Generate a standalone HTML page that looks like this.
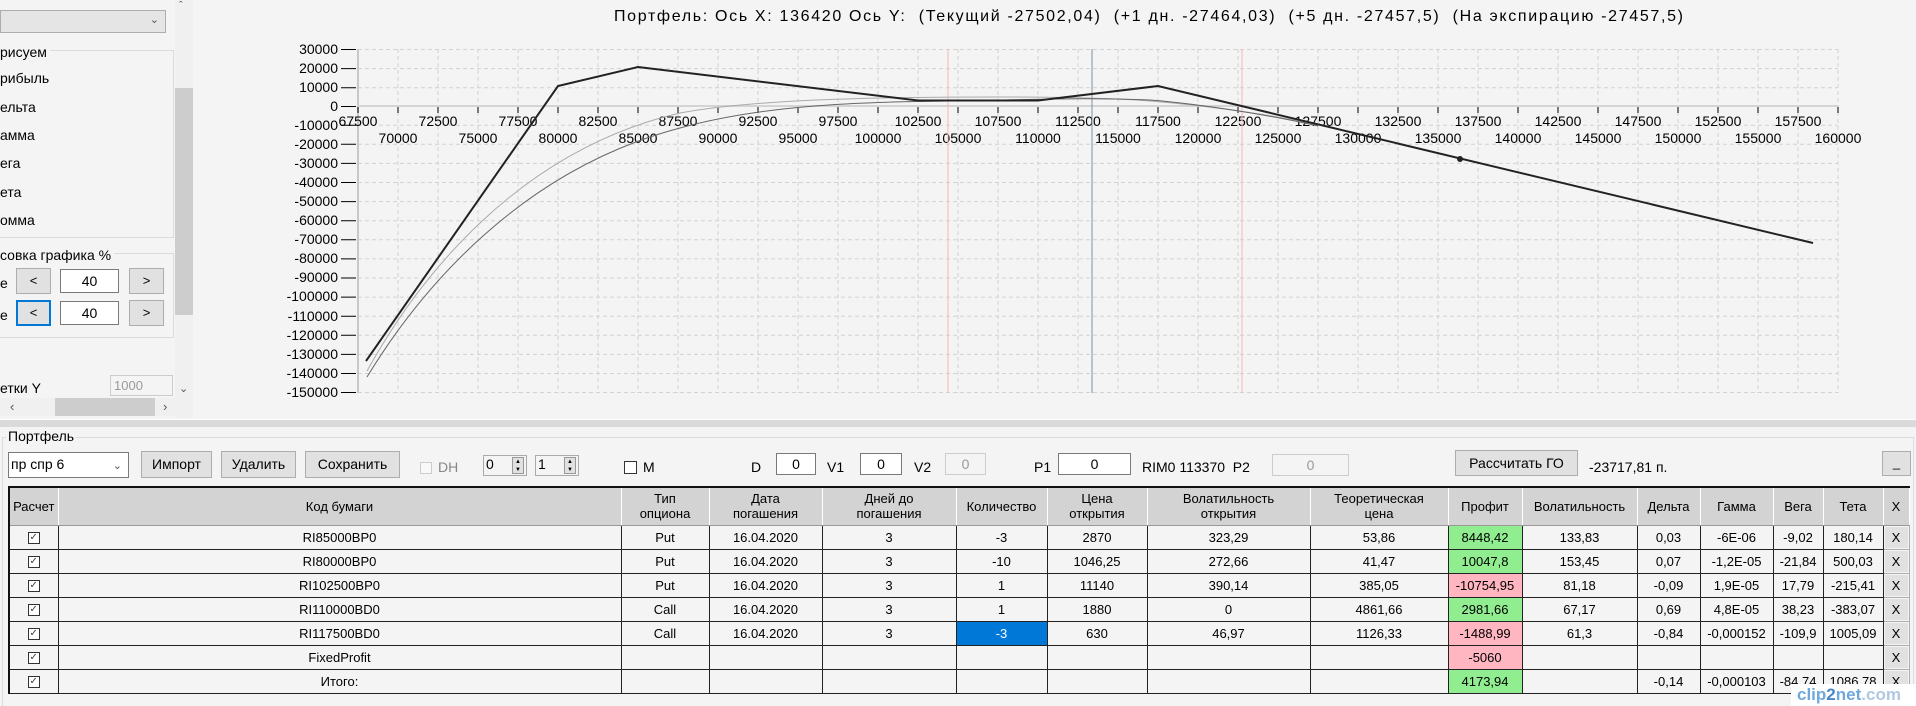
<!DOCTYPE html>
<html><head><meta charset="utf-8"><style>
*{box-sizing:border-box;margin:0;padding:0}
body{width:1916px;height:706px;overflow:hidden;background:#f4f4f4;font-family:"Liberation Sans",sans-serif;font-size:13px;color:#000;position:relative}
.a{position:absolute;white-space:nowrap}
.btn{position:absolute;background:#e1e1e1;border:1px solid #adadad;text-align:center;font-size:13px}
.box{position:absolute;background:#fff;border:1px solid #7a7a7a;text-align:center;font-size:13px}
.dis{background:#f4f4f4;border-color:#ccc;color:#999}
table{position:absolute;left:8px;top:486px;border-collapse:collapse;table-layout:fixed;border-top:2px solid #111;border-left:2px solid #111}
td{border:1px solid #222;height:24px;text-align:center;font-size:13px;background:#f4f4f4;overflow:hidden;white-space:nowrap;padding:0}
th{background:#d3d3d3;font-weight:normal;font-size:13px;height:38px;border-right:1px solid #fff;border-left:1px solid #aaa;border-bottom:1px solid #999;line-height:15px;padding:0}
.g{background:#90ee90}.p{background:#ffb6c1}
.cb{display:inline-block;width:12px;height:12px;border:1px solid #333;background:#fff;font-size:10px;line-height:10px;color:#444;vertical-align:middle}
.x{background:#e1e1e1;border:1px solid #adadad;box-shadow:inset 0 0 0 1px #f4f4f4}
</style></head><body>
<!-- left panel -->
<div class="a" style="left:0;top:0;width:196px;height:418px;background:#f4f4f4"></div>
<div class="a" style="left:0;top:10px;width:166px;height:23px;background:#e5e5e5;border:1px solid #adadad"><span class="a" style="right:6px;top:2px;font-size:11px;color:#555">&#8964;</span></div>
<div class="a" style="left:175px;top:0;width:18px;height:418px;background:#f0f0f0"></div>
<div class="a" style="left:179px;top:0;font-size:11px;color:#555">&#710;</div>
<div class="a" style="left:175px;top:88px;width:18px;height:227px;background:#cdcdcd"></div>
<div class="a" style="left:0;top:50px;width:174px;height:188px;border:1px solid #dcdcdc;border-left:none"></div>
<div class="a" style="left:0;top:44px;background:#f4f4f4;padding-right:3px;font-size:14px">рисуем</div>
<div class="a" style="left:0;top:70px;font-size:14px">рибыль</div>
<div class="a" style="left:0;top:99px;font-size:14px">ельта</div>
<div class="a" style="left:0;top:127px;font-size:14px">амма</div>
<div class="a" style="left:0;top:155px;font-size:14px">ега</div>
<div class="a" style="left:0;top:184px;font-size:14px">ета</div>
<div class="a" style="left:0;top:212px;font-size:14px">омма</div>
<div class="a" style="left:0;top:253px;width:174px;height:85px;border:1px solid #dcdcdc;border-left:none"></div>
<div class="a" style="left:0;top:247px;background:#f4f4f4;padding-right:3px;font-size:14px">совка графика %</div>
<div class="a" style="left:0;top:275px;font-size:14px">е</div>
<div class="btn" style="left:16px;top:268px;width:35px;height:26px;line-height:24px">&lt;</div>
<div class="box" style="left:60px;top:269px;width:59px;height:24px;line-height:22px;font-size:14px">40</div>
<div class="btn" style="left:129px;top:268px;width:35px;height:26px;line-height:24px">&gt;</div>
<div class="a" style="left:0;top:307px;font-size:14px">е</div>
<div class="btn" style="left:16px;top:300px;width:35px;height:26px;line-height:22px;border:2px solid #0078d7">&lt;</div>
<div class="box" style="left:60px;top:301px;width:59px;height:24px;line-height:22px;font-size:14px">40</div>
<div class="btn" style="left:129px;top:300px;width:35px;height:26px;line-height:24px">&gt;</div>
<div class="a" style="left:0;top:380px;font-size:14px">етки Y</div>
<div class="box dis" style="left:110px;top:375px;width:63px;height:21px;line-height:19px;text-align:left;padding-left:3px">1000</div>
<div class="a" style="left:179px;top:382px;font-size:11px;color:#555">&#8964;</div>
<div class="a" style="left:0;top:398px;width:175px;height:18px;background:#f0f0f0"></div>
<div class="a" style="left:55px;top:398px;width:100px;height:18px;background:#cdcdcd"></div>
<div class="a" style="left:10px;top:399px;color:#555">&#8249;</div>
<div class="a" style="left:163px;top:399px;color:#555">&#8250;</div>
<!-- chart -->
<svg class="a" style="left:0;top:0" width="1916" height="420">
<text x="614" y="21" font-family="Liberation Sans" font-size="16" textLength="1069" lengthAdjust="spacing" style="white-space:pre">Портфель: Ось X: 136420 Ось Y:  (Текущий -27502,04)  (+1 дн. -27464,03)  (+5 дн. -27457,5)  (На экспирацию -27457,5)</text>
<g stroke="#d2d2d2" stroke-dasharray="4,3" stroke-width="1">
<path d="M398 49V393M438 49V393M478 49V393M518 49V393M558 49V393M598 49V393M638 49V393M678 49V393M718 49V393M758 49V393M798 49V393M838 49V393M878 49V393M918 49V393M958 49V393M998 49V393M1038 49V393M1078 49V393M1118 49V393M1158 49V393M1198 49V393M1238 49V393M1278 49V393M1318 49V393M1358 49V393M1398 49V393M1438 49V393M1478 49V393M1518 49V393M1558 49V393M1598 49V393M1638 49V393M1678 49V393M1718 49V393M1758 49V393M1798 49V393M1838 49V393"/>
<path d="M358 49.5H1838M358 68.6H1838M358 87.7H1838M358 125.2H1838M358 144.3H1838M358 163.4H1838M358 182.5H1838M358 201.6H1838M358 220.7H1838M358 239.8H1838M358 258.9H1838M358 278H1838M358 297.1H1838M358 316.2H1838M358 335.3H1838M358 354.4H1838M358 373.5H1838M358 392.5H1838"/>
</g>
<line x1="358" y1="49" x2="358" y2="393" stroke="#c8c8c8" stroke-width="2"/>
<line x1="358" y1="106" x2="1838" y2="106" stroke="#d4d4d4" stroke-width="2"/>
<g stroke="#000"><path d="M358 107v6M398 107v6M438 107v6M478 107v6M518 107v6M558 107v6M598 107v6M638 107v6M678 107v6M718 107v6M758 107v6M798 107v6M838 107v6M878 107v6M918 107v6M958 107v6M998 107v6M1038 107v6M1078 107v6M1118 107v6M1158 107v6M1198 107v6M1238 107v6M1278 107v6M1318 107v6M1358 107v6M1398 107v6M1438 107v6M1478 107v6M1518 107v6M1558 107v6M1598 107v6M1638 107v6M1678 107v6M1718 107v6M1758 107v6M1798 107v6M1838 107v6"/>
<path d="M341 49.5h15M341 68.6h15M341 87.7h15M341 106.5h15M341 125.2h15M341 144.3h15M341 163.4h15M341 182.5h15M341 201.6h15M341 220.7h15M341 239.8h15M341 258.9h15M341 278h15M341 297.1h15M341 316.2h15M341 335.3h15M341 354.4h15M341 373.5h15M341 392.5h15"/></g>
<g font-family="Liberation Sans" font-size="14" text-anchor="end">
<text x="338" y="54">30000</text><text x="338" y="73">20000</text><text x="338" y="92">10000</text><text x="338" y="111">0</text><text x="338" y="130">-10000</text><text x="338" y="149">-20000</text><text x="338" y="168">-30000</text><text x="338" y="187">-40000</text><text x="338" y="206">-50000</text><text x="338" y="225">-60000</text><text x="338" y="244">-70000</text><text x="338" y="263">-80000</text><text x="338" y="282">-90000</text><text x="338" y="301">-100000</text><text x="338" y="321">-110000</text><text x="338" y="340">-120000</text><text x="338" y="359">-130000</text><text x="338" y="378">-140000</text><text x="338" y="397">-150000</text>
</g>
<g font-family="Liberation Sans" font-size="14" text-anchor="middle">
<text x="358" y="126">67500</text><text x="438" y="126">72500</text><text x="518" y="126">77500</text><text x="598" y="126">82500</text><text x="678" y="126">87500</text><text x="758" y="126">92500</text><text x="838" y="126">97500</text><text x="918" y="126">102500</text><text x="998" y="126">107500</text><text x="1078" y="126">112500</text><text x="1158" y="126">117500</text><text x="1238" y="126">122500</text><text x="1318" y="126">127500</text><text x="1398" y="126">132500</text><text x="1478" y="126">137500</text><text x="1558" y="126">142500</text><text x="1638" y="126">147500</text><text x="1718" y="126">152500</text><text x="1798" y="126">157500</text>
<text x="398" y="143">70000</text><text x="478" y="143">75000</text><text x="558" y="143">80000</text><text x="638" y="143">85000</text><text x="718" y="143">90000</text><text x="798" y="143">95000</text><text x="878" y="143">100000</text><text x="958" y="143">105000</text><text x="1038" y="143">110000</text><text x="1118" y="143">115000</text><text x="1198" y="143">120000</text><text x="1278" y="143">125000</text><text x="1358" y="143">130000</text><text x="1438" y="143">135000</text><text x="1518" y="143">140000</text><text x="1598" y="143">145000</text><text x="1678" y="143">150000</text><text x="1758" y="143">155000</text><text x="1838" y="143">160000</text>
</g>
<line x1="948" y1="49" x2="948" y2="393" stroke="#f2b8b8"/>
<line x1="1242" y1="49" x2="1242" y2="393" stroke="#f2b8b8"/>
<line x1="1092" y1="49" x2="1092" y2="393" stroke="#8090a0"/>
<path fill="none" stroke="#aaa" stroke-width="1" d="M367,371 C420,275 520,150 680,113 C760,98 900,97 1000,97 C1060,97 1110,98 1150,101 C1200,105 1270,114 1318,125"/>
<path fill="none" stroke="#666" stroke-width="1" d="M367,377 C420,290 520,170 680,128 C760,106 850,102 948,101 C1030,100 1080,97 1150,100 C1200,104 1270,115 1318,126"/>
<polyline fill="none" stroke="#222" stroke-width="2" points="366,361 558,86 638,67 918,100.5 1038,100.5 1158,86 1813,243"/>
<circle cx="1460" cy="159" r="3" fill="#222"/>
</svg>
<!-- splitter -->
<div class="a" style="left:0;top:419px;width:1916px;height:8px;background:#dadada;border-top:1px solid #fff"></div>
<div class="a" style="left:2px;top:437px;width:1912px;height:269px;border:1px solid #dcdcdc;border-bottom:none"></div>
<div class="a" style="left:6px;top:428px;background:#f4f4f4;padding:0 2px;font-size:14px">Портфель</div>
<!-- toolbar -->
<div class="box" style="left:8px;top:452px;width:121px;height:26px;text-align:left;padding-left:2px;line-height:22px;font-size:14px">пр спр 6<span class="a" style="right:6px;top:2px;font-size:11px;color:#555">&#8964;</span></div>
<div class="btn" style="left:141px;top:451px;width:71px;height:27px;line-height:25px;font-size:14px">Импорт</div>
<div class="btn" style="left:221px;top:451px;width:75px;height:27px;line-height:25px;font-size:14px">Удалить</div>
<div class="btn" style="left:305px;top:451px;width:95px;height:27px;line-height:25px;font-size:14px">Сохранить</div>
<div class="a" style="left:420px;top:462px;width:12px;height:12px;border:1px solid #ccc;background:#f8f8f8"></div>
<div class="a" style="left:438px;top:459px;color:#888;font-size:14px">DH</div>
<div class="a" style="left:483px;top:455px;width:44px;height:21px;border:1px solid #aaa;background:#f4f4f4;padding-left:2px;font-size:14px">0<span class="a" style="left:28px;top:1px;width:12px;height:17px;background:#e1e1e1;border:1px solid #999;font-size:6px;line-height:8px;text-align:center">▲<br>▼</span></div>
<div class="a" style="left:535px;top:455px;width:44px;height:21px;border:1px solid #aaa;background:#f4f4f4;padding-left:2px;font-size:14px">1<span class="a" style="left:28px;top:1px;width:12px;height:17px;background:#e1e1e1;border:1px solid #999;font-size:6px;line-height:8px;text-align:center">▲<br>▼</span></div>
<div class="a" style="left:624px;top:461px;width:13px;height:13px;border:1px solid #333;background:#fff"></div>
<div class="a" style="left:643px;top:459px;font-size:14px">M</div>
<div class="a" style="left:751px;top:459px;font-size:14px">D</div>
<div class="box" style="left:776px;top:453px;width:40px;height:22px;line-height:20px;font-size:14px">0</div>
<div class="a" style="left:827px;top:459px;font-size:14px">V1</div>
<div class="box" style="left:860px;top:453px;width:42px;height:22px;line-height:20px;font-size:14px">0</div>
<div class="a" style="left:914px;top:459px;font-size:14px">V2</div>
<div class="box dis" style="left:945px;top:453px;width:41px;height:22px;line-height:20px;font-size:14px">0</div>
<div class="a" style="left:1034px;top:459px;font-size:14px">P1</div>
<div class="box" style="left:1058px;top:453px;width:73px;height:22px;line-height:20px;font-size:14px">0</div>
<div class="a" style="left:1142px;top:459px;font-size:14px">RIM0 113370&nbsp; P2</div>
<div class="box dis" style="left:1272px;top:454px;width:77px;height:22px;line-height:20px;font-size:14px">0</div>
<div class="btn" style="left:1455px;top:450px;width:123px;height:26px;line-height:24px;font-size:14px">Рассчитать ГО</div>
<div class="a" style="left:1589px;top:459px;font-size:14px">-23717,81 п.</div>
<div class="btn" style="left:1882px;top:451px;width:29px;height:25px;line-height:22px">_</div>
<!-- table -->
<table>
<colgroup><col style="width:49px"><col style="width:563px"><col style="width:88px"><col style="width:113px"><col style="width:134px"><col style="width:91px"><col style="width:100px"><col style="width:163px"><col style="width:138px"><col style="width:74px"><col style="width:115px"><col style="width:63px"><col style="width:73px"><col style="width:50px"><col style="width:60px"><col style="width:26px"></colgroup>
<tr><th>Расчет</th><th>Код бумаги</th><th>Тип<br>опциона</th><th>Дата<br>погашения</th><th>Дней до<br>погашения</th><th>Количество</th><th>Цена<br>открытия</th><th>Волатильность<br>открытия</th><th>Теоретическая<br>цена</th><th>Профит</th><th>Волатильность</th><th>Дельта</th><th>Гамма</th><th>Вега</th><th>Тета</th><th>X</th></tr>
<tr><td><span class="cb">&#10003;</span></td><td>RI85000BP0</td><td>Put</td><td>16.04.2020</td><td>3</td><td>-3</td><td>2870</td><td>323,29</td><td>53,86</td><td class="g">8448,42</td><td>133,83</td><td>0,03</td><td>-6E-06</td><td>-9,02</td><td>180,14</td><td class="x">X</td></tr>
<tr><td><span class="cb">&#10003;</span></td><td>RI80000BP0</td><td>Put</td><td>16.04.2020</td><td>3</td><td>-10</td><td>1046,25</td><td>272,66</td><td>41,47</td><td class="g">10047,8</td><td>153,45</td><td>0,07</td><td>-1,2E-05</td><td>-21,84</td><td>500,03</td><td class="x">X</td></tr>
<tr><td><span class="cb">&#10003;</span></td><td>RI102500BP0</td><td>Put</td><td>16.04.2020</td><td>3</td><td>1</td><td>11140</td><td>390,14</td><td>385,05</td><td class="p">-10754,95</td><td>81,18</td><td>-0,09</td><td>1,9E-05</td><td>17,79</td><td>-215,41</td><td class="x">X</td></tr>
<tr><td><span class="cb">&#10003;</span></td><td>RI110000BD0</td><td>Call</td><td>16.04.2020</td><td>3</td><td>1</td><td>1880</td><td>0</td><td>4861,66</td><td class="g">2981,66</td><td>67,17</td><td>0,69</td><td>4,8E-05</td><td>38,23</td><td>-383,07</td><td class="x">X</td></tr>
<tr><td><span class="cb">&#10003;</span></td><td>RI117500BD0</td><td>Call</td><td>16.04.2020</td><td>3</td><td style="background:#0078d7;color:#fff">-3</td><td>630</td><td>46,97</td><td>1126,33</td><td class="p">-1488,99</td><td>61,3</td><td>-0,84</td><td>-0,000152</td><td>-109,9</td><td>1005,09</td><td class="x">X</td></tr>
<tr><td><span class="cb">&#10003;</span></td><td>FixedProfit</td><td></td><td></td><td></td><td></td><td></td><td></td><td></td><td class="p">-5060</td><td></td><td></td><td></td><td></td><td></td><td class="x">X</td></tr>
<tr><td><span class="cb">&#10003;</span></td><td>Итого:</td><td></td><td></td><td></td><td></td><td></td><td></td><td></td><td class="g">4173,94</td><td></td><td>-0,14</td><td>-0,000103</td><td>-84,74</td><td>1086,78</td><td class="x">X</td></tr>
</table>
<div class="a" style="left:1791px;top:684px;width:125px;height:22px;background:#fff;font-size:17px;font-weight:bold;color:#6fa8dc;padding-left:6px;line-height:22px">clip<span style="color:#4a86c5">2</span>net<span style="color:#b0c8e0">.com</span></div>
</body></html>
